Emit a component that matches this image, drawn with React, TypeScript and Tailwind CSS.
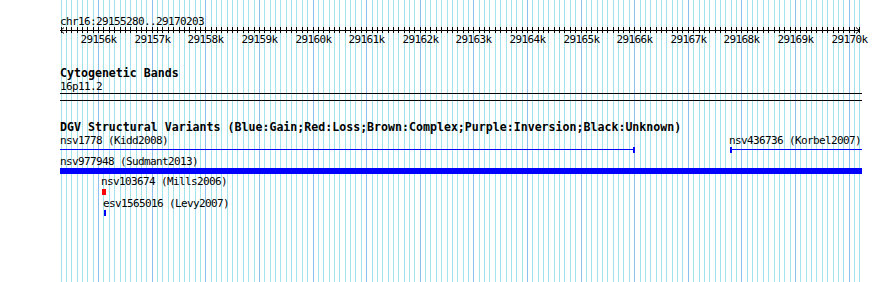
import React from "react";

const START = 29155280;
const END = 29170203;
const LEFT = 60;
const BPP = (END - START) / 800;
const xOf = (b: number) => LEFT + (b - START) / BPP;

const minorTicks: number[] = [];
for (let b = 29155300; b <= 29170200; b += 100) minorTicks.push(b);
const majorTicks = minorTicks.filter((b) => b % 1000 === 0);

const mono = "font-['DejaVu_Sans_Mono','Liberation_Mono',monospace]";

function Grid() {
  return (
    <svg
      className="absolute inset-0"
      width={890}
      height={282}
      shapeRendering="crispEdges"
    >
      {minorTicks.map((b) => {
        const x = Math.floor(xOf(b)) + 0.5;
        const major = b % 1000 === 0;
        return (
          <line
            key={b}
            x1={x}
            x2={x}
            y1={0}
            y2={282}
            stroke={major ? "#8cc0ee" : "#a2e4ec"}
            strokeWidth={1}
          />
        );
      })}
    </svg>
  );
}

function Ruler() {
  return (
    <svg
      width={830}
      height={21}
      className="block overflow-visible"
      shapeRendering="crispEdges"
    >
      <line x1={0} x2={800} y1={3.5} y2={3.5} stroke="#000" />
      <polyline
        points="4,0.5 0.5,3.5 4,6.5"
        fill="none"
        stroke="#000"
        shapeRendering="auto"
      />
      <polyline
        points="796,0.5 799.5,3.5 796,6.5"
        fill="none"
        stroke="#000"
        shapeRendering="auto"
      />
      {minorTicks.map((b) => {
        const x = Math.floor(xOf(b)) - LEFT + 0.5;
        return <line key={b} x1={x} x2={x} y1={0} y2={6} stroke="#000" />;
      })}
      {majorTicks.map((b) => {
        const x = Math.floor(xOf(b)) - LEFT + 0.5;
        return (
          <text
            key={b}
            x={x - 18}
            y={16}
            fontFamily="'DejaVu Sans Mono', 'Liberation Mono', monospace"
            fontSize={11}
            letterSpacing={-0.62}
            fill="#000"
          >
            {`${b / 1000}k`}
          </text>
        );
      })}
    </svg>
  );
}

type Label = { text: string; x: number };

function LabelRow({ labels, className = "" }: { labels: Label[]; className?: string }) {
  return (
    <div className={`relative h-[13px] text-[11px] leading-[13px] tracking-[-0.62px] whitespace-pre ${className}`}>
      {labels.map((l) => (
        <span key={l.text} className="absolute top-0" style={{ left: l.x - LEFT }}>
          {l.text}
        </span>
      ))}
    </div>
  );
}

export default function App() {
  return (
    <div className={`relative h-[282px] w-[890px] overflow-hidden bg-white text-black ${mono}`}>
      <Grid />
      <div className="relative flex w-[890px] flex-col pl-[60px] pt-[16px]">
        <div className="h-[11px] text-[11px] leading-[11px] tracking-[-0.62px] whitespace-pre">
          chr16:29155280..29170203
        </div>
        <Ruler />

        <div className="mt-[19px] h-[13px] text-[11.6px] font-bold leading-[13px] whitespace-pre">
          Cytogenetic Bands
        </div>
        <div className="h-[13px] text-[11px] leading-[13px] tracking-[-0.62px]">16p11.2</div>
        <div className="h-[8px] w-[802px] border-y border-black" />

        <div className="mt-[20px] h-[13px] text-[11.6px] font-bold leading-[13px] whitespace-pre">
          DGV Structural Variants (Blue:Gain;Red:Loss;Brown:Complex;Purple:Inversion;Black:Unknown)
        </div>

        <LabelRow
          labels={[
            { text: "nsv1778 (Kidd2008)", x: 60 },
            { text: "nsv436736 (Korbel2007)", x: 729 },
          ]}
        />
        <div className="relative h-[6px] w-[802px]">
          <div className="absolute top-[2px] left-0 h-px w-[575px] bg-[#0000ff]" />
          <div className="absolute top-0 left-[573px] h-[6px] w-[2px] bg-[#0000ff]" />
          <div className="absolute top-0 left-[670px] h-[6px] w-[2px] bg-[#0000ff]" />
          <div className="absolute top-[2px] left-[670px] h-px w-[132px] bg-[#0000ff]" />
        </div>

        <LabelRow className="mt-[2px]" labels={[{ text: "nsv977948 (Sudmant2013)", x: 60 }]} />
        <div className="h-[6px] w-[802px] bg-[#0000ff]" />

        <LabelRow className="mt-[1px]" labels={[{ text: "nsv103674 (Mills2006)", x: 101 }]} />
        <div className="relative mt-[1px] h-[6px]">
          <div className="absolute top-0 left-[42px] h-[6px] w-[4px] bg-[#ff0000]" />
        </div>

        <LabelRow className="mt-[2px]" labels={[{ text: "esv1565016 (Levy2007)", x: 103 }]} />
        <div className="relative h-[6px]">
          <div className="absolute top-0 left-[44px] h-[6px] w-[2px] bg-[#0000ff]" />
        </div>
      </div>
    </div>
  );
}
